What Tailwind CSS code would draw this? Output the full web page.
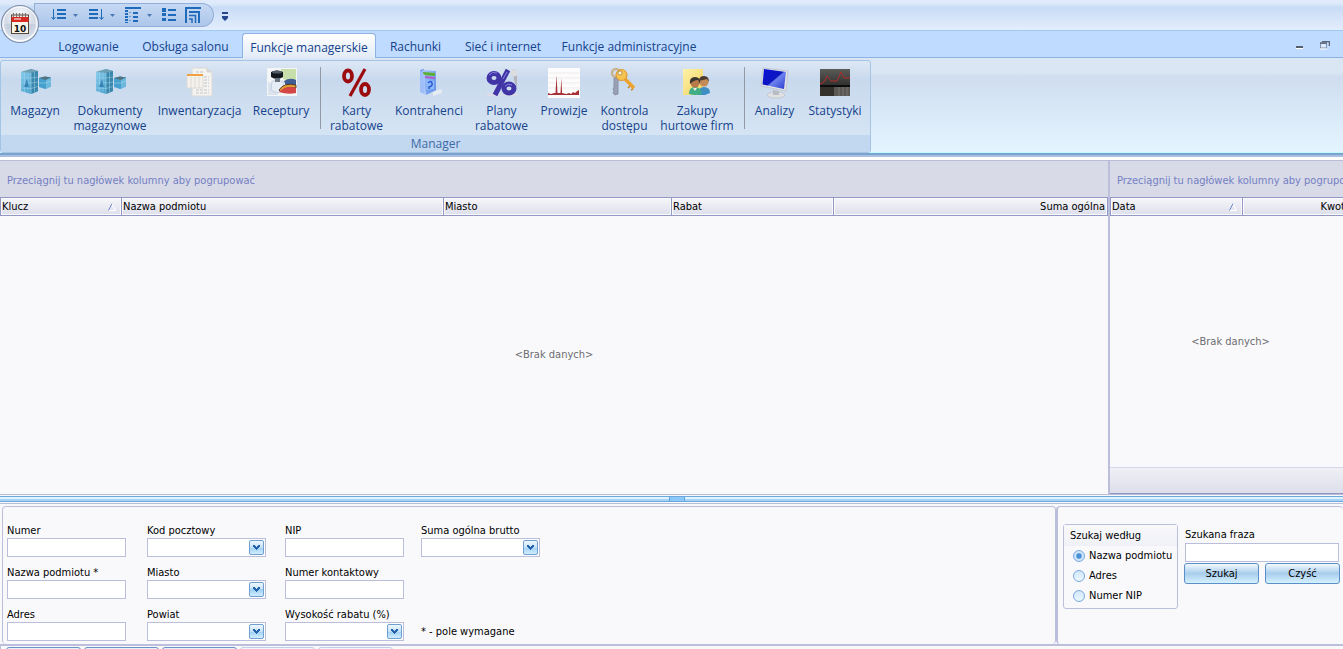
<!DOCTYPE html>
<html lang="pl">
<head>
<meta charset="utf-8">
<title>Funkcje managerskie</title>
<script src="https://cdn.jsdelivr.net/npm/@tailwindcss/browser@4"></script>
</head>
<body class="h-screen overflow-hidden flex flex-col bg-[#f9f9fc] text-black text-[11px] leading-[14px] font-['DejaVu_Sans_Condensed','DejaVu_Sans',sans-serif]">

<svg class="absolute size-0" aria-hidden="true">
  <defs>
    <linearGradient id="gBlue" x1="0" y1="0" x2="1" y2="1"><stop offset="0" stop-color="#8fd0ee"/><stop offset="1" stop-color="#2f8fc0"/></linearGradient>
    <linearGradient id="gScreen" x1="0" y1="0" x2="1" y2="1"><stop offset="0" stop-color="#0a12d8"/><stop offset=".5" stop-color="#0d16c0"/><stop offset=".55" stop-color="#6d84ee"/><stop offset="1" stop-color="#2a3ad0"/></linearGradient>
    <linearGradient id="gStat" x1="0" y1="0" x2="0" y2="1"><stop offset="0" stop-color="#5b5b58"/><stop offset="1" stop-color="#141414"/></linearGradient>
    <linearGradient id="gNote" x1="0" y1="0" x2="1" y2="1"><stop offset="0" stop-color="#fff3a8"/><stop offset="1" stop-color="#f0d060"/></linearGradient>
    <linearGradient id="gFold" x1="0" y1="0" x2="1" y2="1"><stop offset="0" stop-color="#a9ccfb"/><stop offset="1" stop-color="#5a8ae8"/></linearGradient>
    <linearGradient id="gDrop" x1="0" y1="0" x2="0" y2="1"><stop offset="0" stop-color="#f2f9fe"/><stop offset=".5" stop-color="#c5e1f7"/><stop offset=".5" stop-color="#9fcff4"/><stop offset="1" stop-color="#d4f0ff"/></linearGradient>
    <symbol id="drop" viewBox="0 0 15 15"><rect x=".5" y=".5" width="14" height="14" rx="1.500" fill="url(#gDrop)" stroke="#6f9fd3"/><path d="M4 5h2v1h1v1h1V6h1V5h2v2h-1v1H9v1H8v1H7V9H6V8H5V7H4z" fill="#2363ae"/></symbol>
    <symbol id="store" viewBox="0 0 32 32">
      <path d="M2 5l10-3 7 2v20l-7 3-10-3z" fill="url(#gBlue)"/>
      <path d="M12 5l7-1v20l-7 3z" fill="#3a86ac"/>
      <path d="M2 5l10-3 7 2-7 2z" fill="#6f9fb5"/>
      <path d="M2 11h10l7-1M2 16h10l7-1M2 21l10 .5 7-2M5.500 5v20M9 5.500v20M15.500 5v20" stroke="#9fd6ee" stroke-width=".5" fill="none"/>
      <path d="M12 6v21" stroke="#bfe6f6" stroke-width=".5"/>
      <path d="M5 20l3-8 2 8z" fill="#2370a8" opacity=".7"/>
      <path d="M20 11l6-1.500 6 1v9l-6 2.500-6-2z" fill="#45a0cd"/>
      <path d="M20 11l6-1.500 6 1-5 2.500z" fill="#53707e"/>
      <path d="M27 13l5-2.500v9L27 22z" fill="#6db8dc"/>
      <path d="M20 16h7l5-2" stroke="#a9dcf2" stroke-width=".5" fill="none"/>
    </symbol>
  </defs>
</svg>

<header class="shrink-0">
  <!-- title strip with quick access bar -->
  <div class="relative h-[31px] bg-linear-to-b from-[#dfebfa] from-10% via-[#c9dcf6] via-25% to-[#e3eefd] border-b border-[#9ecbf5] pl-[34px] flex items-start pt-[3px]">
    <div class="h-6 w-[180px] shrink-0 pl-[16px] rounded-r-full rounded-bl-[20px] border border-[#93aed8] bg-linear-to-b from-[#c6d9f3] to-[#adc6ea] flex items-center text-[#1f6bbb] [&>*]:shrink-0">
      <button aria-label="Sortuj rosnąco" class="w-[22px]"><svg width="16" height="14" viewBox="0 0 16 14" fill="none" stroke="currentColor"><path d="M2.500 1v10M.5 9l2 2.500L4.500 9"/><path d="M6 2h9M6 6h9M6 10h9" stroke-width="2"/></svg></button>
      <span class="w-[15px]"><svg width="5" height="3"><path d="M0 0h5L2.500 3z" fill="#4a78b5"/></svg></span>
      <button aria-label="Sortuj malejąco" class="w-[22px]"><svg width="17" height="14" viewBox="0 0 17 14" fill="none" stroke="currentColor"><path d="M13.500 1v10M11.500 9l2 2.500 2-2.500"/><path d="M1 2h9M1 6h9M1 10h9" stroke-width="2"/></svg></button>
      <span class="w-[15px]"><svg width="5" height="3"><path d="M0 0h5L2.500 3z" fill="#4a78b5"/></svg></span>
      <button aria-label="Grupuj" class="w-[22px]"><svg width="17" height="16" viewBox="0 0 17 16" fill="none" stroke="currentColor" stroke-width="2"><path d="M0 1h16M8 6h5M8 10h5M8 14h5"/><path d="M1.500 0v16" stroke-dasharray="2 1" stroke-width="3"/><path d="M5 5v11" stroke-dasharray="1 3" stroke-width="1"/></svg></button>
      <span class="w-[15px]"><svg width="5" height="3"><path d="M0 0h5L2.500 3z" fill="#4a78b5"/></svg></span>
      <button aria-label="Lista" class="w-[23px]"><svg width="14" height="14" viewBox="0 0 14 14" fill="currentColor"><path d="M0 0h4v4H0zM0 5h4v3H0zM0 10h4v3H0zM6 1h8v2H6zM6 6h8v2H6zM6 11h8v2H6z"/></svg></button>
      <button aria-label="Układ"><svg width="16" height="16" viewBox="0 0 16 16" fill="none" stroke="currentColor"><path d="M0 1h16M1 1v15M4 5h10v11" stroke-width="2"/><path d="M4 8.500h6.500V16M4 12h3v4" stroke-width="1.500"/></svg></button>
    </div>
    <button aria-label="Dostosuj pasek" class="ml-[8px] mt-[9px]"><svg width="6" height="9"><path d="M0 0h6v2H0zM0 4h6v2L3 9 0 6z" fill="#25478d"/></svg></button>
    <!-- application button -->
    <button aria-label="Menu aplikacji" class="absolute left-0 top-[4px] z-10 size-[40px]">
      <svg width="40" height="40" viewBox="0 0 40 40">
        <defs><radialGradient id="orb" cx=".5" cy=".3" r=".8"><stop offset="0" stop-color="#fff"/><stop offset=".5" stop-color="#d3dae6"/><stop offset=".8" stop-color="#f2f5fa"/><stop offset="1" stop-color="#b4c2d8"/></radialGradient></defs>
        <circle cx="20" cy="20" r="18.500" fill="url(#orb)" stroke="#8090ab" stroke-width="1.200"/>
        <circle cx="20" cy="20" r="17" fill="none" stroke="#fff" stroke-width="1"/>
        <path d="M4 20a16 16 0 0 0 32 0z" fill="#aebbd0" opacity=".35"/>
        <rect x="11.500" y="11" width="17" height="18.500" fill="#f8f5ea" stroke="#5d4538" stroke-width="1"/>
        <path d="M11.500 13h17v5h-17z" fill="#d62a22"/>
        <path d="M13.500 9v4M16.500 9v4M19.500 9v4M22.500 9v4M25.500 9v4" stroke="#77706c" stroke-width="1.200"/>
        <path d="M14 15h7" stroke="#fff" stroke-width="1"/>
        <text x="20" y="28" text-anchor="middle" font-family="DejaVu Sans" font-weight="bold" font-size="9" fill="#111">10</text>
      </svg>
    </button>
  </div>

  <div class="font-['Open_Sans',sans-serif] text-[12px] leading-[15px] text-[#15428b]">
  <!-- tabs -->
  <nav class="h-[27px] bg-[#bfdbff] border-b border-[#8db2e3] pl-[45px] flex items-end [&>button]:h-[25px] [&>button]:pt-[3px]">
    <button class="w-[87px]">Logowanie</button>
    <button class="w-[107px] mr-[3px]">Obsługa salonu</button>
    <button class="w-[134px] -mb-px rounded-t border border-b-0 border-[#8db2e3] bg-linear-to-b from-white to-[#e1ebf7]">Funkcje managerskie</button>
    <button class="w-[79px]">Rachunki</button>
    <button class="w-[96px]">Sieć i internet</button>
    <button class="w-[156px]">Funkcje administracyjne</button>
    <div class="ml-auto mr-[13px] mb-[7px] flex items-end gap-4">
      <button aria-label="Minimalizuj" class="pl-[2px]"><svg width="8" height="4"><path d="M0 0h7v2H0z" fill="#555f70"/><path d="M0 2h7v1H0z" fill="#fff"/></svg></button>
      <button aria-label="Przywróć"><svg width="10" height="9" fill="none"><path d="M2 .5h7.500V5" stroke="#5b6577" stroke-width="1.500"/><rect x=".5" y="2.500" width="6" height="4.500" fill="#dceaff" stroke="#8392ab"/><path d="M0 2h7" stroke="#5b6577" stroke-width="1.500"/><path d="M0 8h7" stroke="#fff"/></svg></button>
    </div>
  </nav>

  <!-- ribbon -->
  <div class="h-[97px] pt-[2px] border-b-2 border-[#7ba3cd] bg-linear-to-b from-[#dbe6f4] from-15% via-[#cfddef] via-20% to-[#e5f5ff] shadow-[inset_0_-1px_0_#c0fbff]">
    <div class="w-[871px] h-[93px] rounded-[3px] border border-[#a3c4e4] flex flex-col bg-linear-to-b from-[#dde8f5] via-[#c9d9ed] via-20% to-[#d9e8f6] overflow-hidden">
      <div class="flex-1 flex items-start pt-[6px] pl-px text-center [&_svg]:mx-auto [&_svg]:mb-[4px] [&>button]:shrink-0">
        <button class="w-[66px]"><svg width="32" height="32"><use href="#store"/></svg>Magazyn</button>
        <button class="w-[84px]"><svg width="32" height="32"><use href="#store"/></svg>Dokumenty<br>magazynowe</button>
        <button class="w-[95px]"><svg width="32" height="32" viewBox="0 0 32 32"><path d="M8 1h15v4h5v24H8z" fill="#f4f3f1" stroke="#dcd9d5"/><path d="M23 1v4h4" fill="#d6d4d2"/><path d="M20 10h5M20 13h5M20 16h5M20 19h5M12 23h13M12 26h13M12 5h8" stroke="#c4c4c8" stroke-dasharray="3 1"/><path d="M3 8h16v13H3z" fill="#f4f1ec" stroke="#dcd8d2" stroke-width=".8"/><path d="M3 7h16v2H3z" fill="#f0a040"/><path d="M7 10v11M11 10v11M15 10v11" stroke="#d9d5ce" stroke-width=".8"/></svg>Inwentaryzacja</button>
        <button class="w-[68px]"><svg width="32" height="32" viewBox="0 0 32 32"><path d="M2 1h30v28H2z" fill="#f4f5f6"/><path d="M16 2h15v14l-13-4z" fill="#c8dfac"/><path d="M3 15l10 3v10H3z" fill="#dbe3ee"/><path d="M7 14h11l1 9q-6 5-13 0z" fill="#e6edf6" stroke="#afbdce" stroke-width=".6"/><path d="M6 5q6-3 12 0v5q-6 4-12 0z" fill="#161a1f"/><ellipse cx="12" cy="5" rx="5" ry="1.500" fill="#525b64"/><path d="M10 11h5v4h-5z" fill="#6c7680"/><path d="M19 14q6-4 12-1v6H21z" fill="#3f5e94"/><path d="M14 23q5-8 17-5v3q-10-2-15 4z" fill="#e29a30" stroke="#3c2822" stroke-width=".8"/><path d="M14 25q7-7 17-4v5q-8 2-17-1z" fill="#d54747"/></svg>Receptury</button>
        <span class="w-[11px] h-[62px] flex justify-center"><i class="w-px bg-[#9199a6]"></i></span>
        <button class="w-[61px]"><svg width="32" height="32" viewBox="0 0 32 32" fill="none" stroke="#9c0b0e"><ellipse cx="7" cy="9" rx="4" ry="5.500" stroke-width="3.800"/><ellipse cx="24" cy="22.500" rx="4" ry="5.500" stroke-width="3.800"/><path d="M24 2L9 29" stroke-width="3.200"/></svg>Karty<br>rabatowe</button>
        <button class="w-[84px]"><svg width="32" height="32" viewBox="0 0 32 32"><path d="M20 25l8-3 1 4-9 3z" fill="#e7ecf3"/><path d="M7 3l4-1v24l-4-1z" fill="#6c94e6"/><path d="M9 3l14 1v19l-10 5z" fill="url(#gFold)"/><path d="M10 5l12 1v3l-12-1z" fill="#5cae2f"/><path d="M11 9l11 1v2l-11-1z" fill="#b05cc8"/><path d="M13 13l8 1v8l-8 1z" fill="#8fb8fa"/><path d="M15 16q3-3 4 0t-3 4v2" fill="none" stroke="#2759cf" stroke-width="1.500"/><path d="M7 3l5 5v20l-5-3z" fill="#a8c6f9" opacity=".85"/></svg>Kontrahenci</button>
        <button class="w-[61px]"><svg width="32" height="32" viewBox="0 0 32 32"><path d="M1 26q14 4 30 0v3H1z" fill="#dcdde6"/><path d="M27 2q4 0 4 6v12q-4-6-4-18z" fill="#b3b5bb"/><circle cx="28" cy="6" r="3.500" fill="#dadce0"/><g fill="none" stroke="#4034a6"><ellipse cx="8" cy="11" rx="5" ry="4.500" stroke-width="5"/><ellipse cx="23" cy="21.500" rx="5" ry="4.500" stroke-width="5"/><path d="M22 3L9 28" stroke-width="5"/></g><path d="M3 8q3-4 8-2M19 19q3-3 7-1M21 5l-4 7" stroke="#8a80e0" stroke-width="1" fill="none"/></svg>Plany<br>rabatowe</button>
        <button class="w-[64px]"><svg width="32" height="32" viewBox="0 0 32 32"><path d="M0 1h32v30H0z" fill="#fdfcfc"/><path d="M0 6h32M0 11h32M0 16h32M0 21h32" stroke="#eadfe0" stroke-width=".6"/><path d="M0 26l3 1 3-1 1.500 0L8.500 8l1 18 3 0 .8-15 .8 15 4 1 3-1 2 1 2-2 2 1 2-2 1.900-1v5H0z" fill="#a63237"/></svg>Prowizje</button>
        <button class="w-[57px]"><svg width="32" height="32" viewBox="0 0 32 32" fill="none"><circle cx="7" cy="6" r="4" stroke="#c8b390" stroke-width="2.500"/><path d="M5 11h5l-1 4v12l-3 1-2-2 1-2-1-2 1-2z" fill="#9ba1b5" stroke="#7f86a0" stroke-width=".8"/><path d="M16 12l9 9" stroke="#eda22d" stroke-width="3.500"/><path d="M21 19l-2 2M24 22l-2 1" stroke="#d08518" stroke-width="1.500"/><circle cx="12.500" cy="8" r="5.500" fill="#f6c252" stroke="#dd9526"/><circle cx="11" cy="6" r="2" fill="#fdf3d3" stroke="#8b6a31" stroke-width=".6"/></svg>Kontrola<br>dostępu</button>
        <button class="w-[88px]"><svg width="32" height="32" viewBox="0 0 32 32"><path d="M2 2h20v26H2z" fill="url(#gNote)"/><path d="M17 28q0-8 6-8 6 0 6 6l-5 2z" fill="#3f8fc4"/><circle cx="23" cy="15" r="4.500" fill="#c48a58"/><path d="M18 14q0-5 5-5t5 6l-2-3z" fill="#4a3a30"/><path d="M8 27q0-7 6-7t7 7q-7 2-13 0z" fill="#3fae84"/><circle cx="14" cy="16" r="4.500" fill="#b97a4a"/><path d="M9 17q-1-7 5-7t5 7l-2-4q-4 0-8 4z" fill="#3c3630"/><path d="M12 21l2 3 2-3z" fill="#f2e8dc"/></svg>Zakupy<br>hurtowe firm</button>
        <span class="w-[7px] h-[62px] flex justify-center"><i class="w-px bg-[#9199a6]"></i></span>
        <button class="w-[53px]"><svg width="32" height="32" viewBox="0 0 32 32"><ellipse cx="17" cy="28" rx="9" ry="3" fill="#dfe1e3" stroke="#b7babd" stroke-width=".6"/><path d="M14 23l6 1v4h-6z" fill="#b9bcc0"/><path d="M4 1l25 3-2 20L2 19z" fill="#e2e4e8" stroke="#b2b6be" stroke-width=".6"/><path d="M5 2l22 3-2 17L3.500 17.500z" fill="url(#gScreen)"/></svg>Analizy</button>
        <button class="w-[68px]"><svg width="32" height="32" viewBox="0 0 32 32"><path d="M1 2h30v27H1z" fill="url(#gStat)"/><path d="M1 18h30v2H1z" fill="#0c0c0c"/><path d="M1 20h30v9H1z" fill="#34302c"/><path d="M15 20h16v9H15z" fill="#5b5754"/><path d="M20 20v9M24 20v9M28 20v9" stroke="#77736f"/><path d="M1 17l4-2 3-6 4 5h6l4-9 3 6h6" fill="none" stroke="#b02c2c"/></svg>Statystyki</button>
      </div>
      <div class="h-[17px] bg-[#c1d8f0] text-center leading-[17px] text-[#3e6aaa]">Manager</div>
    </div>
  </div>
  </div>
  <div class="h-[6px] bg-white border-t-2 border-b border-t-[#a9bfe3] border-b-[#b9bdd8]"></div>
</header>

<!-- data grids -->
<main class="flex-1 min-h-0 flex">
  <section class="flex-1 min-w-0 flex flex-col">
    <p class="h-[36px] shrink-0 bg-[#d8dae8] pl-[7px] leading-[40px] text-[#7480c2]">Przeciągnij tu nagłówek kolumny aby pogrupować</p>
    <table class="w-full table-fixed border-collapse shrink-0 [&_th]:h-[18px] [&_th]:p-0 [&_th]:px-px [&_th]:pt-px [&_th]:font-normal [&_th]:text-left [&_th]:border [&_th]:border-[#9498c5] [&_th]:bg-linear-to-b [&_th]:from-[#f5f5f9] [&_th]:to-[#dcdeea] [&_th]:shadow-[inset_0_0_0_1px_#fbfbfd]">
      <thead><tr>
        <th class="w-[121px]"><span class="flex justify-between pr-1">Klucz <svg class="mt-[3px]" width="8" height="8" fill="none"><path d="M.5 7.500L4 .5" stroke="#6f86cc"/><path d="M4 .5l3.500 7H1" stroke="#fff"/></svg></span></th>
        <th class="w-[322px]">Nazwa podmiotu</th>
        <th class="w-[228px]">Miasto</th>
        <th class="w-[162px]">Rabat</th>
        <th><span class="block text-right pr-px">Suma ogólna</span></th>
      </tr></thead>
    </table>
    <p class="flex-1 flex items-center justify-center text-[#6c6c70]">&lt;Brak danych&gt;</p>
  </section>
  <section class="w-[235px] shrink-0 flex flex-col overflow-hidden border-l-2 border-[#bbbfdb]">
    <p class="h-[36px] shrink-0 bg-[#d8dae8] pl-[7px] leading-[40px] text-[#7480c2] whitespace-nowrap">Przeciągnij tu nagłówek kolumny aby pogrupować</p>
    <table class="w-[244px] table-fixed border-collapse shrink-0 [&_th]:h-[18px] [&_th]:p-0 [&_th]:px-px [&_th]:pt-px [&_th]:font-normal [&_th]:text-left [&_th]:border [&_th]:border-[#9498c5] [&_th]:bg-linear-to-b [&_th]:from-[#f5f5f9] [&_th]:to-[#dcdeea] [&_th]:shadow-[inset_0_0_0_1px_#fbfbfd]">
      <thead><tr>
        <th class="w-[132px]"><span class="flex justify-between pr-1">Data <svg class="mt-[3px]" width="8" height="8" fill="none"><path d="M.5 7.500L4 .5" stroke="#6f86cc"/><path d="M4 .5l3.500 7H1" stroke="#fff"/></svg></span></th>
        <th><span class="block text-right pr-px">Kwota</span></th>
      </tr></thead>
    </table>
    <p class="flex-1 flex items-center justify-center pl-2 text-[#6c6c70]">&lt;Brak danych&gt;</p>
    <div class="h-[27px] shrink-0 border-t border-b border-t-[#d5d7ee] border-b-[#8f96c2] bg-linear-to-b from-[#f0f0f5] to-[#dcdeea]"></div>
  </section>
</main>

<!-- splitter -->
<div class="h-[10px] shrink-0 border-y border-[#b9bdd8] py-px">
  <div class="h-[6px] border-y border-[#6ba9dd] bg-linear-to-b from-[#e0f2fd] from-50% to-[#a5d2f5] to-50%"><div class="mx-auto h-full w-4 translate-x-[5px] bg-[#8cc8fa] border-x border-[#5aa5e2]"></div></div>
</div>

<!-- details form and search -->
<footer class="shrink-0 h-[140px] mt-[2px] flex border-b-2 border-[#bbbfdb]">
  <form class="ml-[2px] flex-1 min-w-0 rounded border border-b-0 border-[#bbbfdb] pl-1 pt-[17px] flex [&_label]:block [&_label]:h-[14px] [&_input]:block [&_input]:w-[119px] [&_input]:h-[19px] [&_input]:border [&_input]:border-[#bbbfdb] [&_input]:bg-white [&_select]:appearance-none [&_select]:block [&_select]:w-[119px] [&_select]:h-[19px] [&_select]:border [&_select]:border-[#bbbfdb] [&_select]:bg-white">
    <div class="w-[140px] flex flex-col gap-[9px]">
      <div><label for="numer">Numer</label><input id="numer"></div>
      <div><label for="nazwa">Nazwa podmiotu *</label><input id="nazwa"></div>
      <div><label for="adres">Adres</label><input id="adres"></div>
    </div>
    <div class="w-[138px] flex flex-col gap-[9px]">
      <div><label for="kod">Kod pocztowy</label><div class="relative"><select id="kod"><option></option></select><svg class="absolute left-[102px] top-[2px] pointer-events-none" width="15" height="15"><use href="#drop"/></svg></div></div>
      <div><label for="miasto">Miasto</label><div class="relative"><select id="miasto"><option></option></select><svg class="absolute left-[102px] top-[2px] pointer-events-none" width="15" height="15"><use href="#drop"/></svg></div></div>
      <div><label for="powiat">Powiat</label><div class="relative"><select id="powiat"><option></option></select><svg class="absolute left-[102px] top-[2px] pointer-events-none" width="15" height="15"><use href="#drop"/></svg></div></div>
    </div>
    <div class="w-[136px] flex flex-col gap-[9px]">
      <div><label for="nip">NIP</label><input id="nip"></div>
      <div><label for="kontakt">Numer kontaktowy</label><input id="kontakt"></div>
      <div><label for="rabat">Wysokość rabatu (%)</label><div class="relative"><select id="rabat"><option></option></select><svg class="absolute left-[102px] top-[2px] pointer-events-none" width="15" height="15"><use href="#drop"/></svg></div></div>
    </div>
    <div class="w-[140px] flex flex-col justify-between pb-[5px]">
      <div><label for="suma">Suma ogólna brutto</label><div class="relative"><select id="suma"><option></option></select><svg class="absolute left-[102px] top-[2px] pointer-events-none" width="15" height="15"><use href="#drop"/></svg></div></div>
      <p>* - pole wymagane</p>
    </div>
  </form>
  <form class="w-[287px] shrink-0 rounded border border-b-0 border-[#bbbfdb] border-r-0 border-l-2 pl-[5px] pt-[17px] flex items-start">
    <div role="radiogroup" aria-labelledby="wg" class="w-[115px] h-[85px] rounded-[3px] border border-[#bbbfdb] [&_input]:appearance-none [&_input]:size-3 [&_input]:shrink-0 [&_input]:rounded-full [&_input]:border [&_input]:border-[#7ba7dc] [&_input]:bg-linear-to-b [&_input]:from-[#d3e8fb] [&_input]:to-[#eaf8ff] [&_label]:flex [&_label]:items-center [&_label]:gap-1 [&_label]:h-5 [&_label]:pl-[9px] [&_label]:whitespace-nowrap">
      <p id="wg" class="h-[21px] pl-[6px] pt-[4px] bg-linear-to-b from-[#f9f9fc] to-[#f0f1f6]">Szukaj według</p>
      <label><input type="radio" name="wg" checked class="checked:bg-radial checked:from-[#4a90d6] checked:from-30% checked:to-[#cfe6fb] checked:to-50%">Nazwa podmiotu</label>
      <label><input type="radio" name="wg">Adres</label>
      <label><input type="radio" name="wg">Numer NIP</label>
    </div>
    <div class="ml-[6px] w-[156px] pt-[4px]">
      <label for="fraza" class="block pl-px mb-px">Szukana fraza</label>
      <input id="fraza" class="ml-px block w-[154px] h-[19px] border border-[#bbbfdb] bg-white">
      <div class="mt-px flex justify-between [&>button]:w-[75px] [&>button]:h-[21px] [&>button]:rounded-[3px] [&>button]:border [&>button]:border-[#5b8fc9] [&>button]:bg-linear-to-b [&>button]:from-[#f3f9fe] [&>button]:via-[#a9cdec] [&>button]:via-50% [&>button]:to-[#d6f2ff]">
        <button type="button">Szukaj</button><button type="button">Czyść</button>
      </div>
    </div>
  </form>
</footer>
<div class="shrink-0 h-[3px] overflow-hidden pt-px pl-[5px] flex gap-[3px] border-l border-[#bbbfdb] [&>button]:w-[75px] [&>button]:h-5 [&>button]:rounded-[3px] [&>button]:border [&>button]:border-[#6c92c6] [&>button]:bg-[#e8f1fa]">
  <button aria-label="Nowy"></button><button aria-label="Edytuj"></button><button aria-label="Usuń"></button><button aria-label="Zapisz" disabled class="opacity-40"></button><button aria-label="Anuluj" disabled class="opacity-40"></button>
</div>
</body>
</html>
